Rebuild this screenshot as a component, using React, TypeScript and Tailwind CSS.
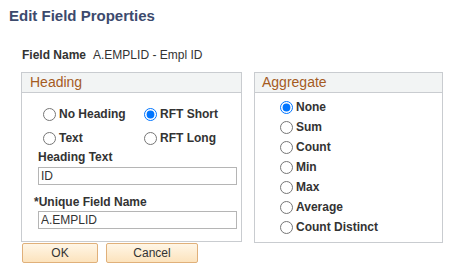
export default function App() {
  const headingOptions = [
    ["No Heading", false],
    ["RFT Short", true],
    ["Text", false],
    ["RFT Long", false],
  ] as const;
  const aggregates = ["None", "Sum", "Count", "Min", "Max", "Average", "Count Distinct"];

  return (
    <div className="h-[270px] w-[452px] overflow-hidden bg-white font-['Liberation_Sans',Arial,sans-serif] text-[#333]">
      <h1 className="pl-[9px] pt-[7px] text-[15px] font-bold leading-[18px] text-[#3c4a6d]">
        Edit Field Properties
      </h1>

      <div className="mt-[23px] flex items-baseline pl-[22px] text-[12px] leading-[14px]">
        <span className="font-bold">Field Name</span>
        <span className="ml-[7px]">A.EMPLID - Empl ID</span>
      </div>

      <div className="mt-[10px] flex items-start pl-[21px]">
        {/* Heading group */}
        <div className="h-[170px] w-[221px] border border-[#c9ccd0]">
          <div className="h-[20px] border-b border-[#c9ccd0] bg-[#f2f4f4] pl-[8px] text-[14px] leading-[18px] text-[#a55b1f]">
            Heading
          </div>
          <div className="grid grid-cols-[101px_1fr] pl-[21px] pt-[9px] text-[12px] font-bold">
            {headingOptions.map(([label, checked]) => (
              <label key={label} className="flex h-[24px] items-center gap-[3px]">
                <input
                  type="radio"
                  name="heading"
                  defaultChecked={checked}
                  className="m-0 h-[13px] w-[13px]"
                />
                {label}
              </label>
            ))}
          </div>
          <div className="pl-[16px] text-[12px] font-bold leading-[14px]">Heading Text</div>
          <input
            defaultValue="ID"
            className="ml-[16px] mt-[3px] block h-[18px] w-[199px] border border-[#b5b5b5] px-[2px] text-[12px] outline-none"
          />
          <div className="mt-[10px] pl-[12px] text-[12px] font-bold leading-[14px]">*Unique Field Name</div>
          <input
            defaultValue="A.EMPLID"
            className="ml-[16px] mt-[2px] block h-[18px] w-[199px] border border-[#b5b5b5] px-[2px] text-[12px] outline-none"
          />
        </div>

        {/* Aggregate group */}
        <div className="ml-[12px] h-[171px] w-[189px] border border-[#c9ccd0]">
          <div className="h-[20px] border-b border-[#c9ccd0] bg-[#f2f4f4] pl-[7px] text-[14px] leading-[18px] text-[#a55b1f]">
            Aggregate
          </div>
          <div className="pl-[25px] pt-[4px] text-[12px] font-bold">
            {aggregates.map((a) => (
              <label key={a} className="flex h-[20px] items-center gap-[3px]">
                <input
                  type="radio"
                  name="aggregate"
                  defaultChecked={a === "None"}
                  className="m-0 h-[13px] w-[13px]"
                />
                {a}
              </label>
            ))}
          </div>
        </div>
      </div>

      <div className="flex gap-[8px] pl-[22px]">
        <button className="h-[20px] w-[76px] rounded-[2px] border border-[#e0b07a] bg-gradient-to-b from-[#fff6e6] to-[#fce3bd] text-[12px] text-[#333]">
          OK
        </button>
        <button className="h-[20px] w-[92px] rounded-[2px] border border-[#e0b07a] bg-gradient-to-b from-[#fff6e6] to-[#fce3bd] text-[12px] text-[#333]">
          Cancel
        </button>
      </div>
    </div>
  );
}
